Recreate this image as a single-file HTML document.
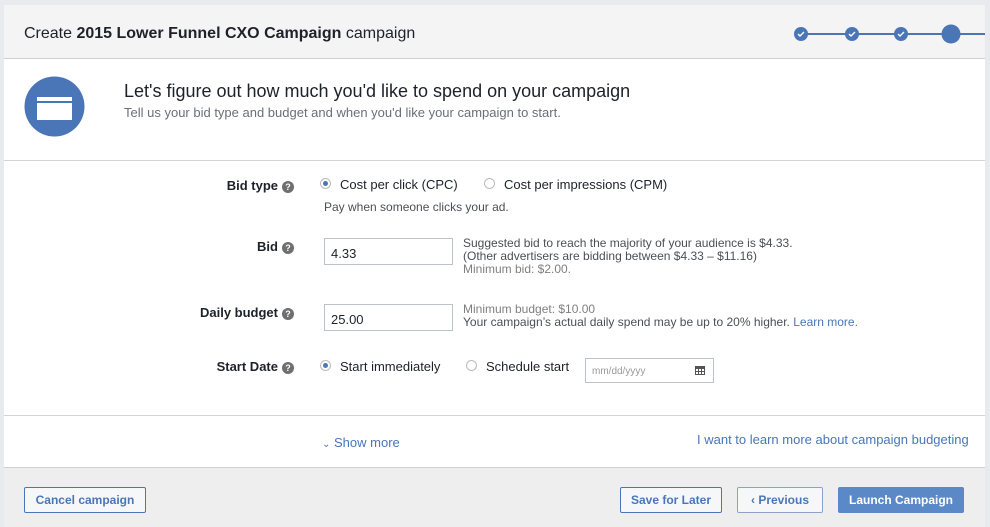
<!DOCTYPE html>
<html><head><style>
*{margin:0;padding:0;box-sizing:border-box}
body{width:990px;height:527px;background:#e9eaed;font-family:"Liberation Sans",sans-serif;position:relative;overflow:hidden;color:#1d2129}
.card{position:absolute;left:4px;top:5px;width:981px;height:522px;background:#fff}
.hdr{position:absolute;left:0;top:0;width:981px;height:54px;background:#f4f4f4;border-bottom:1px solid #cfd0d2}
.t{position:absolute;font-size:13px}
.lbl{position:absolute;font-size:13px;font-weight:bold;text-align:right;width:200px}
.q{display:inline-block;width:12px;height:12px;border-radius:50%;background:#6f6f6f;color:#fff;font-size:9px;line-height:12px;text-align:center;vertical-align:0;margin-left:4px}
.rad{position:absolute;width:11px;height:11px;border-radius:50%;border:1px solid #bbb;background:#fff}
.rad.on::after{content:"";position:absolute;left:2px;top:2px;width:5px;height:5px;border-radius:50%;background:#4a76b8}
.inp{position:absolute;border:1px solid #bdc1c9;height:27px;width:129px;font-size:13px;padding:7px 0 0 6px}
.hint{position:absolute;font-size:12px;color:#4b4f56;line-height:13px}
.line{position:absolute;left:0;width:981px;height:1px;background:#d3d4d6}
.foot{position:absolute;left:0;top:462px;width:981px;height:60px;background:#eeeeee;border-top:1px solid #cfd0d2}
.btn{position:absolute;height:26px;border:1px solid #4a76b8;border-radius:2px;font-size:12px;font-weight:bold;color:#4a76b8;text-align:center;line-height:24px;background:#f6f7f9}
a{color:#4a76b8;text-decoration:none}
</style></head><body>
<div class="card">
<div class="hdr">
<div class="t" style="left:20px;top:20px;font-size:16px;color:#1d2129">Create <b>2015 Lower Funnel CXO Campaign</b> campaign</div>
<svg style="position:absolute;left:780px;top:15px" width="201" height="30">
<line x1="17" y1="14" x2="201" y2="14" stroke="#4a76b8" stroke-width="2"/>
<g fill="#4a76b8"><circle cx="17" cy="14" r="7"/><circle cx="68" cy="14" r="7"/><circle cx="117" cy="14" r="7"/><circle cx="167" cy="14" r="9.5"/></g>
<g stroke="#fff" stroke-width="1.4" fill="none"><path d="M14 14l2 2 4-4"/><path d="M65 14l2 2 4-4"/><path d="M114 14l2 2 4-4"/></g>
</svg>
</div>
<svg style="position:absolute;left:20px;top:71px" width="61" height="61"><circle cx="30.5" cy="30.5" r="30" fill="#4a76b8"/><rect x="13" y="21" width="35" height="23" fill="#fff"/><rect x="13" y="25" width="35" height="2" fill="#4a76b8"/></svg>
<div class="t" style="left:120px;top:76px;font-size:18px;color:#1d2129">Let's figure out how much you'd like to spend on your campaign</div>
<div class="t" style="left:120px;top:100px;font-size:13px;color:#6a6f77">Tell us your bid type and budget and when you'd like your campaign to start.</div>
<div class="line" style="top:155px"></div>

<div class="lbl" style="left:90px;top:173px">Bid type<span class="q">?</span></div>
<div class="rad on" style="left:316px;top:173px"></div><div class="t" style="left:336px;top:172px">Cost per click (CPC)</div>
<div class="rad" style="left:480px;top:173px"></div><div class="t" style="left:500px;top:172px">Cost per impressions (CPM)</div>
<div class="t" style="left:320px;top:195px;font-size:12px;color:#4b4f56">Pay when someone clicks your ad.</div>

<div class="lbl" style="left:90px;top:234px">Bid<span class="q">?</span></div>
<div class="inp" style="left:320px;top:233px">4.33</div>
<div class="hint" style="left:459px;top:232px">Suggested bid to reach the majority of your audience is $4.33.<br>(Other advertisers are bidding between $4.33 – $11.16)<br><span style="color:#7f7f7f">Minimum bid: $2.00.</span></div>

<div class="lbl" style="left:90px;top:300px">Daily budget<span class="q">?</span></div>
<div class="inp" style="left:320px;top:299px">25.00</div>
<div class="hint" style="left:459px;top:298px"><span style="color:#7f7f7f">Minimum budget: $10.00</span><br>Your campaign’s actual daily spend may be up to 20% higher. <a>Learn more.</a></div>

<div class="lbl" style="left:90px;top:354px">Start Date<span class="q">?</span></div>
<div class="rad on" style="left:316px;top:355px"></div><div class="t" style="left:336px;top:354px">Start immediately</div>
<div class="rad" style="left:462px;top:355px"></div><div class="t" style="left:482px;top:354px">Schedule start</div>
<div class="inp" style="left:581px;top:353px;width:129px;height:25px;font-size:10px;color:#999;padding-top:7px">mm/dd/yyyy<svg style="position:absolute;right:8px;top:7px" width="10" height="9"><rect x="0" y="0" width="10" height="9" fill="#555"/><g fill="#fff"><rect x="1" y="3" width="2" height="2"/><rect x="4" y="3" width="2" height="2"/><rect x="7" y="3" width="2" height="2"/><rect x="1" y="6" width="2" height="2"/><rect x="4" y="6" width="2" height="2"/><rect x="7" y="6" width="2" height="2"/></g></svg></div>
<div class="line" style="top:410px"></div>
<div class="t" style="left:318px;top:430px;color:#4a76b8"><span style="font-size:10px">&#8964;</span> Show more</div>
<div class="t" style="left:693px;top:427px;color:#4a76b8">I want to learn more about campaign budgeting</div>

<div class="foot">
<div class="btn" style="left:20px;top:19px;width:122px">Cancel campaign</div>
<div class="btn" style="left:616px;top:19px;width:102px">Save for Later</div>
<div class="btn" style="left:733px;top:19px;width:86px;border-color:#8aa2c8">‹ Previous</div>
<div class="btn" style="left:834px;top:19px;width:126px;background:#5b88c7;border-color:#5b88c7;color:#fff">Launch Campaign</div>
</div>
</div>
</body></html>
